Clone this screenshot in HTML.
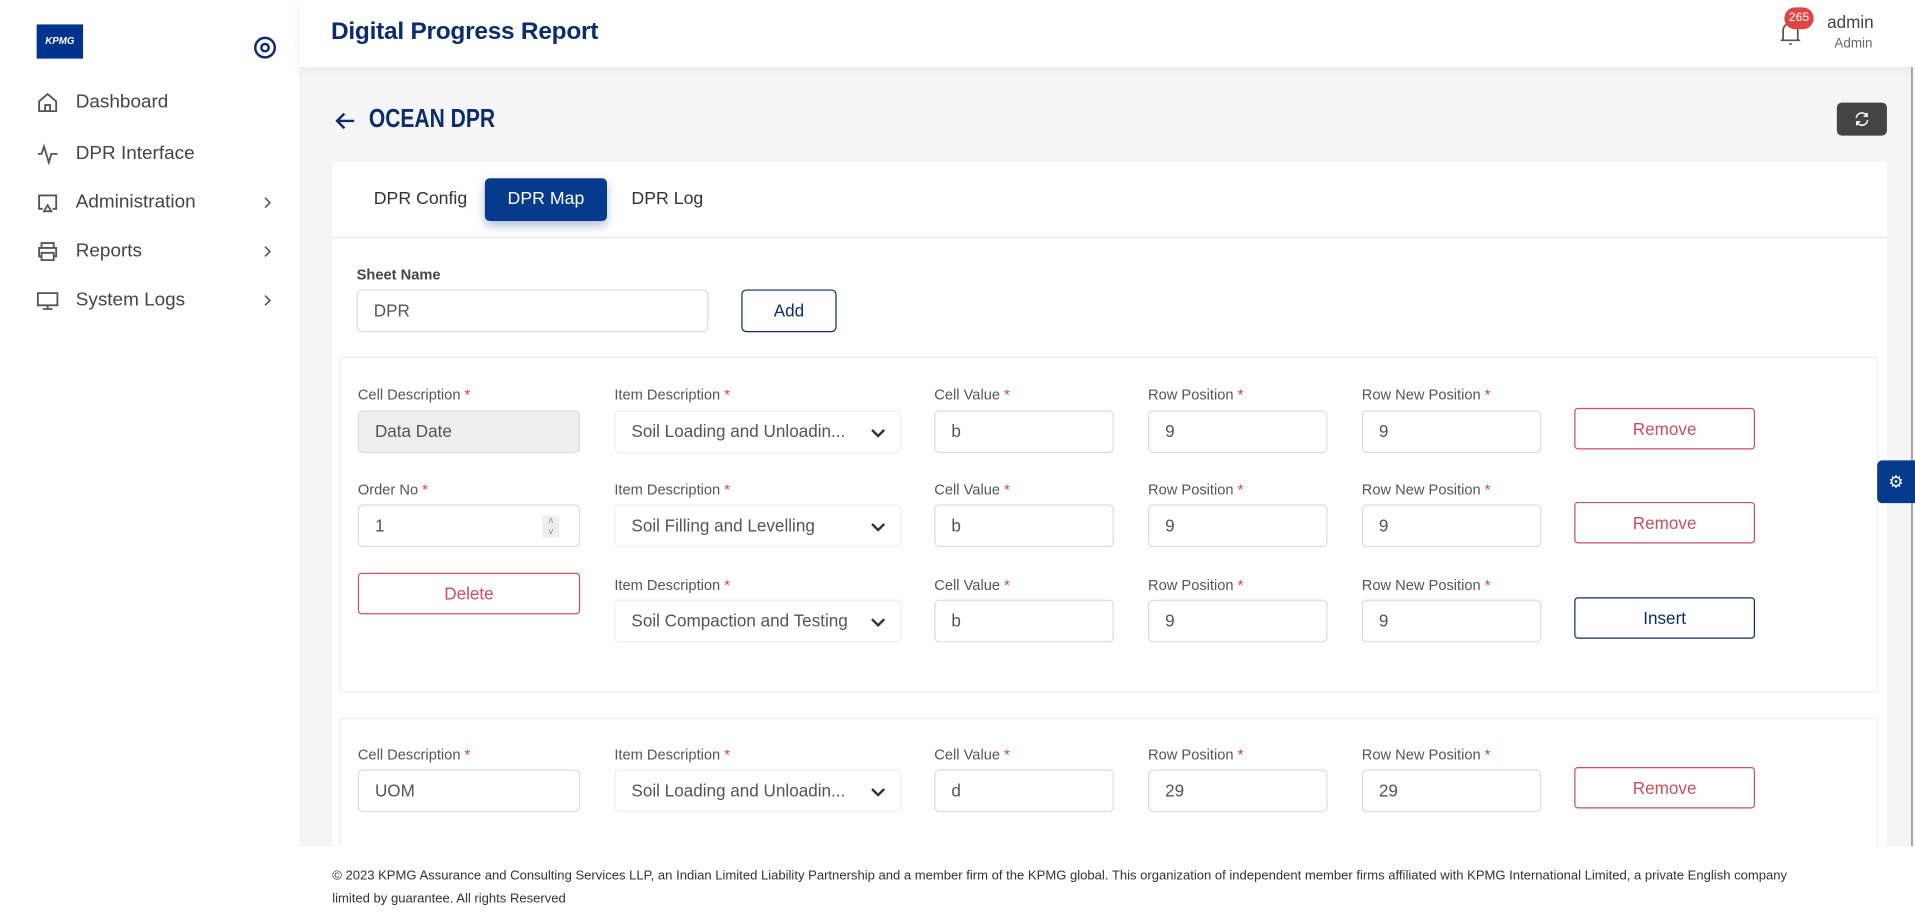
<!DOCTYPE html>
<html><head><meta charset="utf-8"><style>
*{box-sizing:border-box;margin:0;padding:0}
html,body{width:1915px;height:922px;overflow:hidden;background:#fff;font-family:"Liberation Sans",sans-serif}
#w{width:1568px;height:755px;transform:scale(1.22131);transform-origin:0 0;position:relative;background:#f5f5f5}
.a{position:absolute}
.side{left:0;top:0;width:245px;height:755px;background:#fff}
.mi{position:absolute;left:30px;font-size:15.5px;color:#444;display:flex;align-items:center}
.mi svg{width:18px;height:18px;margin-right:14px}
.chev{position:absolute;left:214px;width:10px;height:10px}
.lbl{position:absolute;font-size:12px;color:#555}
.lbl b{color:#d04050;font-weight:normal}
.inp{position:absolute;height:35px;border:1px solid #dcdcdc;border-radius:4px;background:#fff;font-size:14px;color:#555;padding-left:13px;line-height:33px}
.sel{border-color:#eee}
.btn{position:absolute;height:34px;border:1px solid #c9505e;border-radius:3px;color:#c9505e;font-size:14px;text-align:center;line-height:32px;background:#fff}
.dn{border-color:#0b2d6b;color:#0b2d6b}
.arr{position:absolute;right:12px;top:11px}
</style></head><body><div id="w">
<div class="a side">
<div class="a" style="left:30px;top:20px;width:38px;height:28px;background:#00338d;color:#fff;font-size:8px;font-weight:bold;font-style:italic;line-height:28px;text-align:center">KPMG</div>
<div class="a" style="left:208px;top:30px;width:18px;height:18px;border:2px solid #0b2d6b;border-radius:50%"><div style="margin:3px;width:8px;height:8px;border:2px solid #0b2d6b;border-radius:50%"></div></div>
<div class="mi" style="top:75px"><svg viewBox="0 0 18 18" fill="none" stroke="#555" stroke-width="1.5"><path d="M2 8L9 2l7 6v8H2z M7 16v-5h4v5"/></svg>Dashboard</div>
<div class="mi" style="top:117px"><svg viewBox="0 0 18 18" fill="none" stroke="#555" stroke-width="1.5"><path d="M1 9h3l2-6 4 13 2-7h5"/></svg>DPR Interface</div>
<div class="mi" style="top:157px"><svg viewBox="0 0 18 18" fill="none" stroke="#555" stroke-width="1.5"><path d="M5 14H2V3h14v11h-3 M9 11l-3 5h6z"/></svg>Administration</div>
<div class="mi" style="top:197px"><svg viewBox="0 0 18 18" fill="none" stroke="#555" stroke-width="1.5"><path d="M4 6V2h10v4 M4 13H2V6h14v7h-2 M4 10h10v6H4z"/></svg>Reports</div>
<div class="mi" style="top:237px"><svg viewBox="0 0 18 18" fill="none" stroke="#555" stroke-width="1.5"><path d="M1 3h16v10H1z M9 13v3 M5 16h8"/></svg>System Logs</div>
<svg class="chev" style="top:161px" viewBox="0 0 10 10" fill="none" stroke="#555" stroke-width="1.3"><path d="M3 1l4 4-4 4"/></svg>
<svg class="chev" style="top:201px" viewBox="0 0 10 10" fill="none" stroke="#555" stroke-width="1.3"><path d="M3 1l4 4-4 4"/></svg>
<svg class="chev" style="top:241px" viewBox="0 0 10 10" fill="none" stroke="#555" stroke-width="1.3"><path d="M3 1l4 4-4 4"/></svg>
</div>
<div class="a" style="left:245px;top:0;width:1323px;height:55px;background:#fff;box-shadow:0 3px 8px rgba(0,0,0,.05)">
<div class="a" style="left:26px;top:15px;font-size:20px;font-weight:bold;color:#0b2d6b;letter-spacing:-0.2px">Digital Progress Report</div>
<svg class="a" style="left:1212px;top:15px" width="18" height="24" viewBox="0 0 18 24" fill="none" stroke="#555" stroke-width="1.4"><path d="M3 18V10a6 6 0 0 1 12 0v8h2H1z M8 21h2"/></svg>
<div class="a" style="left:1216px;top:6px;width:24px;height:18px;border-radius:9px;background:#e04545;color:#fff;font-size:10px;text-align:center;line-height:18px">265</div>
<div class="a" style="left:1251px;top:10px;font-size:14px;color:#444">admin</div>
<div class="a" style="left:1257px;top:30px;font-size:11px;color:#666">Admin</div>
</div>
<div class="a" style="left:1565px;top:55px;width:1px;height:638px;background:#777"></div>
<svg class="a" style="left:274px;top:90px" width="18" height="18" viewBox="0 0 18 18" fill="none" stroke="#0b2d6b" stroke-width="2"><path d="M16 9H2 M8 3L2 9l6 6"/></svg>
<div class="a" style="left:302px;top:86px;font-size:21px;font-weight:bold;color:#0b2d6b;transform:scaleX(0.82);transform-origin:0 0">OCEAN DPR</div>
<div class="a" style="left:1504px;top:84px;width:41px;height:27px;background:#444;border-radius:4px"><svg style="position:absolute;left:14px;top:7px" width="13" height="13" viewBox="0 0 14 14" fill="none" stroke="#fff" stroke-width="1.4"><path d="M2 6a5 5 0 0 1 9.5-1.5 M12 8a5 5 0 0 1-9.5 1.5 M11.5 1.5v3h-3 M2.5 12.5v-3h3"/></svg></div>
<div class="a" style="left:272px;top:132px;width:1273px;height:561px;background:#fff;border-radius:4px"></div>
<div class="a" style="left:306px;top:155px;font-size:14.5px;color:#333">DPR Config</div>
<div class="a" style="left:397px;top:146px;width:100px;height:35px;background:#063a8c;border-radius:4px;color:#fff;font-size:14.5px;text-align:center;line-height:35px;box-shadow:0 4px 8px rgba(6,58,140,.3)">DPR Map</div>
<div class="a" style="left:517px;top:155px;font-size:14.5px;color:#333">DPR Log</div>
<div class="a" style="left:272px;top:194px;width:1273px;height:1px;background:#e8e8e8"></div>
<div class="a" style="left:292px;top:218px;font-size:12px;font-weight:bold;color:#444">Sheet Name</div>
<div class="inp" style="left:292px;top:237px;width:288px">DPR</div>
<div class="btn dn" style="left:607px;top:237px;width:78px;height:35px;border-radius:4px;line-height:33px">Add</div>
<div class="a" style="left:278px;top:292px;width:1260px;height:275px;border:1px solid #eee"></div>
<div class="a" style="left:278px;top:588px;width:1260px;height:120px;border:1px solid #eee"></div>

<div class="lbl" style="left:293px;top:316px">Cell Description <b>*</b></div>
<div class="inp" style="left:293px;top:336px;width:182px;background:#eee">Data Date</div>
<div class="lbl" style="left:293px;top:394px">Order No <b>*</b></div>
<div class="inp" style="left:293px;top:413px;width:182px">1<span class="a" style="left:150px;top:8px;width:14px;height:18px;background:#eee;font-size:8px;line-height:9px;text-align:center;color:#888">˄<br>˅</span></div>
<div class="btn" style="left:293px;top:469px;width:182px">Delete</div>

<div class="lbl" style="left:503px;top:316px">Item Description <b>*</b></div>
<div class="inp sel" style="left:503px;top:336px;width:235px">Soil Loading and Unloadin...<svg class="arr" width="12" height="12" viewBox="0 0 12 12" fill="none" stroke="#333" stroke-width="2"><path d="M1 4l5 5 5-5"/></svg></div>
<div class="lbl" style="left:503px;top:394px">Item Description <b>*</b></div>
<div class="inp sel" style="left:503px;top:413px;width:235px">Soil Filling and Levelling<svg class="arr" width="12" height="12" viewBox="0 0 12 12" fill="none" stroke="#333" stroke-width="2"><path d="M1 4l5 5 5-5"/></svg></div>
<div class="lbl" style="left:503px;top:472px">Item Description <b>*</b></div>
<div class="inp sel" style="left:503px;top:491px;width:235px">Soil Compaction and Testing<svg class="arr" width="12" height="12" viewBox="0 0 12 12" fill="none" stroke="#333" stroke-width="2"><path d="M1 4l5 5 5-5"/></svg></div>

<div class="lbl" style="left:765px;top:316px">Cell Value <b>*</b></div><div class="inp" style="left:765px;top:336px;width:147px">b</div>
<div class="lbl" style="left:765px;top:394px">Cell Value <b>*</b></div><div class="inp" style="left:765px;top:413px;width:147px">b</div>
<div class="lbl" style="left:765px;top:472px">Cell Value <b>*</b></div><div class="inp" style="left:765px;top:491px;width:147px">b</div>
<div class="lbl" style="left:940px;top:316px">Row Position <b>*</b></div><div class="inp" style="left:940px;top:336px;width:147px">9</div>
<div class="lbl" style="left:940px;top:394px">Row Position <b>*</b></div><div class="inp" style="left:940px;top:413px;width:147px">9</div>
<div class="lbl" style="left:940px;top:472px">Row Position <b>*</b></div><div class="inp" style="left:940px;top:491px;width:147px">9</div>
<div class="lbl" style="left:1115px;top:316px">Row New Position <b>*</b></div><div class="inp" style="left:1115px;top:336px;width:147px">9</div>
<div class="lbl" style="left:1115px;top:394px">Row New Position <b>*</b></div><div class="inp" style="left:1115px;top:413px;width:147px">9</div>
<div class="lbl" style="left:1115px;top:472px">Row New Position <b>*</b></div><div class="inp" style="left:1115px;top:491px;width:147px">9</div>
<div class="btn" style="left:1289px;top:334px;width:148px">Remove</div>
<div class="btn" style="left:1289px;top:411px;width:148px">Remove</div>
<div class="btn dn" style="left:1289px;top:489px;width:148px">Insert</div>

<div class="lbl" style="left:293px;top:611px">Cell Description <b>*</b></div><div class="inp" style="left:293px;top:630px;width:182px">UOM</div>
<div class="lbl" style="left:503px;top:611px">Item Description <b>*</b></div>
<div class="inp sel" style="left:503px;top:630px;width:235px">Soil Loading and Unloadin...<svg class="arr" width="12" height="12" viewBox="0 0 12 12" fill="none" stroke="#333" stroke-width="2"><path d="M1 4l5 5 5-5"/></svg></div>
<div class="lbl" style="left:765px;top:611px">Cell Value <b>*</b></div><div class="inp" style="left:765px;top:630px;width:147px">d</div>
<div class="lbl" style="left:940px;top:611px">Row Position <b>*</b></div><div class="inp" style="left:940px;top:630px;width:147px">29</div>
<div class="lbl" style="left:1115px;top:611px">Row New Position <b>*</b></div><div class="inp" style="left:1115px;top:630px;width:147px">29</div>
<div class="btn" style="left:1289px;top:628px;width:148px">Remove</div>

<div class="a" style="left:1537px;top:377px;width:31px;height:35px;background:#063a8c;border-radius:4px 0 0 4px;color:#fff;font-size:14px;text-align:center;line-height:35px">⚙</div>
<div class="a" style="left:245px;top:693px;width:1323px;height:62px;background:#fff"></div>
<div class="a" style="left:272px;top:708px;width:1220px;font-size:10.7px;color:#333;line-height:19px">© 2023 KPMG Assurance and Consulting Services LLP, an Indian Limited Liability Partnership and a member firm of the KPMG global. This organization of independent member firms affiliated with KPMG International Limited, a private English company limited by guarantee. All rights Reserved</div>
</div></body></html>
